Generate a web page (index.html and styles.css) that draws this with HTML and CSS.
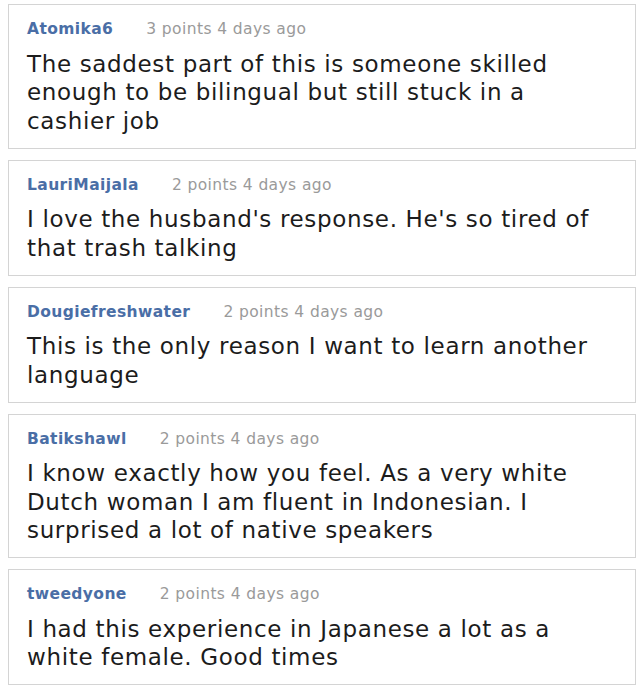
FILE: index.html
```html
<!DOCTYPE html>
<html>
<head>
<meta charset="utf-8">
<link rel="stylesheet" href="styles.css">
</head>
<body>
<div class="list">
  <div class="card">
    <div class="meta"><span class="user">Atomika6</span><span class="info">3 points 4 days ago</span></div>
    <p class="text">The saddest part of this is someone skilled enough to be bilingual but still stuck in a cashier job</p>
  </div>
  <div class="card">
    <div class="meta"><span class="user">LauriMaijala</span><span class="info">2 points 4 days ago</span></div>
    <p class="text">I love the husband's response. He's so tired of that trash talking</p>
  </div>
  <div class="card">
    <div class="meta"><span class="user">Dougiefreshwater</span><span class="info">2 points 4 days ago</span></div>
    <p class="text">This is the only reason I want to learn another language</p>
  </div>
  <div class="card">
    <div class="meta"><span class="user">Batikshawl</span><span class="info">2 points 4 days ago</span></div>
    <p class="text">I know exactly how you feel. As a very white Dutch woman I am fluent in Indonesian. I surprised a lot of native speakers</p>
  </div>
  <div class="card">
    <div class="meta"><span class="user">tweedyone</span><span class="info">2 points 4 days ago</span></div>
    <p class="text">I had this experience in Japanese a lot as a white female. Good times</p>
  </div>
</div>
</body>
</html>
```
FILE: styles.css
```css
html, body {
  margin: 0;
  padding: 0;
  background: #ffffff;
}
body {
  font-family: "DejaVu Sans", Verdana, sans-serif;
}
.list {
  display: flex;
  flex-direction: column;
  gap: 11px;
  padding: 4px 4px 0 8px;
}
.card {
  border: 1px solid #d4d4d4;
  padding: 13px 28px 12.5px 18px;
}
.meta {
  display: flex;
  align-items: baseline;
  gap: 33px;
  line-height: 22px;
  font-size: 15.5px;
  letter-spacing: 0.4px;
}
.user {
  color: #4a6ea6;
  font-weight: bold;
}
.info {
  color: #9a9a9a;
}
.text {
  margin: 9.5px 0 0 0;
  font-size: 23px;
  letter-spacing: 0.65px;
  line-height: 28.5px;
  color: #1c1c1c;
}
```
